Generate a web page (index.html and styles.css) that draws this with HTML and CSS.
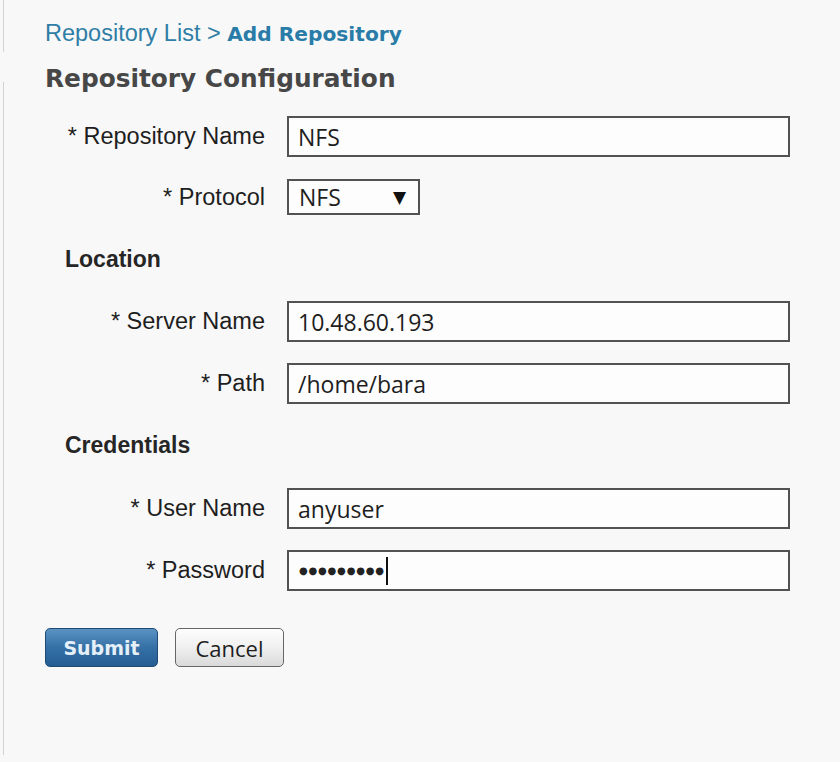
FILE: index.html
```html
<!DOCTYPE html>
<html>
<head>
<meta charset="utf-8">
<link rel="stylesheet" href="styles.css">
</head>
<body>
<div class="page">
  <div class="breadcrumb"><span class="crumb-link">Repository List &gt;</span> <span class="crumb-current">Add Repository</span></div>
  <h1 class="title">Repository Configuration</h1>
  <div class="form">
    <div class="group">
      <div class="row">
        <label class="label">* Repository Name</label>
        <div class="input"><span class="value">NFS</span></div>
      </div>
      <div class="row row-select">
        <label class="label">* Protocol</label>
        <div class="select"><span class="value">NFS</span><span class="arrow">&#9660;</span></div>
      </div>
    </div>
    <div class="section">Location</div>
    <div class="group">
      <div class="row">
        <label class="label">* Server Name</label>
        <div class="input"><span class="value">10.48.60.193</span></div>
      </div>
      <div class="row">
        <label class="label">* Path</label>
        <div class="input"><span class="value">/home/bara</span></div>
      </div>
    </div>
    <div class="section section-2">Credentials</div>
    <div class="group">
      <div class="row">
        <label class="label">* User Name</label>
        <div class="input"><span class="value">anyuser</span></div>
      </div>
      <div class="row">
        <label class="label">* Password</label>
        <div class="input"><span class="dots">&#9679;&#9679;&#9679;&#9679;&#9679;&#9679;&#9679;&#9679;&#9679;</span><span class="caret"></span></div>
      </div>
    </div>
  </div>
  <div class="buttons">
    <button class="btn btn-primary">Submit</button>
    <button class="btn btn-default">Cancel</button>
  </div>
</div>
</body>
</html>
```

FILE: styles.css
```css
html, body {
  margin: 0;
  padding: 0;
}
body {
  width: 840px;
  height: 762px;
  overflow: hidden;
  font-family: "Liberation Sans", Arial, sans-serif;
  color: #1e1e1e;
  background:
    linear-gradient(#d2d2d2, #d2d2d2) 3px 0 / 1px 52px no-repeat,
    linear-gradient(#d2d2d2, #d2d2d2) 3px 82px / 1px 673px no-repeat,
    #f8f8f8;
}
.page {
  padding: 18px 0 0 45px;
}
.breadcrumb {
  font-size: 23.5px;
  line-height: 30px;
  height: 30px;
}
.crumb-link {
  color: #2f7ea6;
}
.crumb-current {
  color: #2a7ca8;
  font-family: "DejaVu Sans", Verdana, sans-serif;
  font-weight: bold;
  font-size: 20.2px;
}
.title {
  margin: 16px 0 0 0;
  font-family: "DejaVu Sans", Verdana, sans-serif;
  font-weight: bold;
  font-size: 24.8px;
  line-height: 30px;
  color: #474747;
}
.form {
  margin-top: 22px;
  display: flex;
  flex-direction: column;
}
.group {
  display: flex;
  flex-direction: column;
  gap: 21px;
}
.row {
  display: flex;
  align-items: center;
  height: 41px;
}
.row-select {
  height: 36px;
  margin-top: 1px;
}
.label {
  width: 242px;
  text-align: right;
  font-size: 23.5px;
  padding-right: 22px;
  box-sizing: border-box;
  color: #1e1e1e;
}
.input {
  width: 503px;
  height: 41px;
  box-sizing: border-box;
  border: 2px solid #525252;
  background: #fdfdfd;
  display: flex;
  align-items: center;
  padding-left: 9px;
  font-family: "Open Sans", "Noto Sans", sans-serif;
  font-size: 23px;
  color: #1e1e1e;
}
.select {
  width: 133px;
  height: 36px;
  box-sizing: border-box;
  border: 2px solid #525252;
  background: #fdfdfd;
  display: flex;
  align-items: center;
  justify-content: space-between;
  padding: 0 12px 0 10px;
  font-family: "Open Sans", "Noto Sans", sans-serif;
  font-size: 23px;
}
.arrow {
  font-size: 17px;
  color: #111;
  font-family: "DejaVu Sans", sans-serif;
}
.section {
  font-size: 23px;
  font-weight: bold;
  color: #262626;
  padding-left: 20px;
  height: 86px;
  line-height: 88px;
}
.section-2 {
  height: 84px;
  line-height: 82px;
}
.dots {
  font-family: "DejaVu Sans", sans-serif;
  font-size: 10px;
  letter-spacing: 0.8px;
  color: #222;
  padding-left: 1px;
}
.caret {
  display: inline-block;
  width: 2px;
  height: 28px;
  background: #111;
  margin-left: 1px;
}
.buttons {
  display: flex;
  gap: 17px;
  margin-top: 37px;
}
.btn {
  height: 39px;
  border-radius: 5px;
  font-size: 22px;
  padding: 0;
  cursor: pointer;
}
.btn-primary {
  width: 113px;
  border: 1px solid #1f4b75;
  background: linear-gradient(#5a92c3, #3570a6 50%, #245d92);
  color: #e4eff8;
  font-family: "DejaVu Sans", Verdana, sans-serif;
  font-weight: bold;
  font-size: 19px;
}
.btn-default {
  width: 109px;
  border: 1px solid #666;
  background: linear-gradient(#fdfdfd, #f0f0f0 50%, #d9d9d9);
  color: #1e1e1e;
  font-family: "Open Sans", "Noto Sans", sans-serif;
}
```
